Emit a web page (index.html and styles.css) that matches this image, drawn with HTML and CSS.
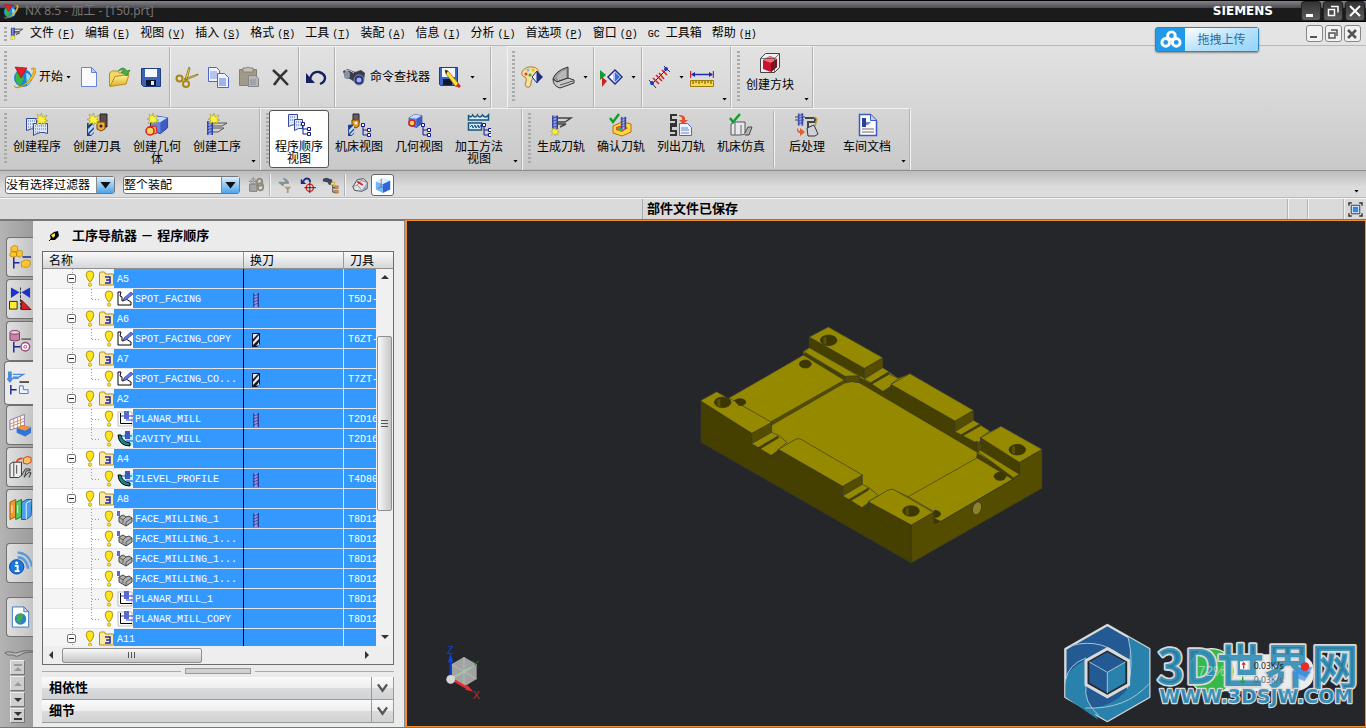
FILE: index.html
```html
<!DOCTYPE html>
<html lang="zh-CN">
<head>
    <meta charset="UTF-8">
    <meta name="viewport" content="width=device-width, initial-scale=1.0">
    <title>NX 8.5 - 加工 - [150.prt]</title>
    <link rel="stylesheet" href="styles.css">
</head>
<body>
    <!-- 图标库 -->
    <svg class="sprite" aria-hidden="true">
        <linearGradient id="gGold" x1="0" y1="0" x2="0" y2="1"><stop offset="0" stop-color="#fff3a0"/><stop offset="1" stop-color="#e0b020"/></linearGradient>
        <linearGradient id="gSteel" x1="0" y1="0" x2="1" y2="0"><stop offset="0" stop-color="#2a3a90"/><stop offset=".5" stop-color="#a8b4f4"/><stop offset="1" stop-color="#1a2680"/></linearGradient>

        <symbol id="star" viewBox="0 0 12 12"><path d="M6 0l1 4 4-2-2 4 3 1-3 1 1 3-3-2-1 3-1-3-4 2 2-4-3-1 3-1-1-4 3 2z" fill="#fff23a" stroke="#8a8a30" stroke-width=".5"/></symbol>
        <symbol id="tree" viewBox="0 0 10 14"><path d="M2 3v9h5M2 7h5" fill="none" stroke="#111a90"/><path d="M.5.5h3v3h-3zM6.500 5.500h3v3h-3zM6.500 10.500h3v3h-3z" fill="#fff" stroke="#111a90"/></symbol>
        <symbol id="endmill" viewBox="0 0 8 14"><path d="M1 0h6v14H1z" fill="url(#gSteel)"/><path d="M1 3l6-2M1 6l6-2M1 9l6-2M1 12l6-2" stroke="#2a3aa8" stroke-width=".8" fill="none"/></symbol>
        <symbol id="drill" viewBox="0 0 8 14"><path d="M0 0h8v11l-3 3H0z" fill="#10162e"/><path d="M1 1h5L1 6zM1 9l6-7v4l-6 6zM4 13l3-4v3z" fill="#e4e8ee"/></symbol>
        <symbol id="bluedrill" viewBox="0 0 8 14"><path d="M0 1h7v10l-3 3H0z" fill="#1c3c8c"/><path d="M1 7l6-6v4l-6 6zM2 12l5-5v3l-3 3z" fill="#b8d8f4"/></symbol>
        <symbol id="gbox" viewBox="0 0 14 14"><path d="M1 4l5-3 7 1v7l-5 4-7-2z" fill="#5f86ec" stroke="#23358a" stroke-width=".7"/><path d="M1 4l7 1 5-3-7-1z" fill="#c5dbff"/><path d="M8 5v8l5-4V2z" fill="#3f5cc4"/></symbol>

        <symbol id="nx" viewBox="0 0 24 24"><circle cx="11" cy="13" r="9" fill="#1487e0"/><path d="M4 9q4-4 7 0l1 5q-3 4-4 7-6-4-4-12z" fill="#39b54a"/><path d="M14 8q5 1 5 6t-4 6z" fill="#8fe0ff"/><path d="M2 21q2 3 9-1T21 8q2-4-2-4 5-3 5 2-2 9-11 14-9 5-11 1z" fill="#f7c21c" stroke="#b07a00" stroke-width=".6"/><path d="M3 2l12 1-6 10z" fill="#e3202c" stroke="#8c0710" stroke-width=".6"/></symbol>
        <symbol id="new" viewBox="0 0 24 24"><path d="M4.500 2.500h10l5 5v14h-15z" fill="#f7faff" stroke="#6a82d8"/><path d="M14.500 2.500v5h5z" fill="#c2cff5" stroke="#6a82d8"/></symbol>
        <symbol id="open" viewBox="0 0 24 24"><path d="M1.500 21V8l3-2h5l2 2h8v5" fill="#f2d868" stroke="#b59018"/><path d="M2 21.500l5-10 14-2-3 9.500z" fill="url(#gGold)" stroke="#b59018"/><path d="M10 6q5-6 9 0l3-1-3 6-6-4 3-.5q-2-3-6-.5z" fill="#48b048" stroke="#1c7020" stroke-width=".6"/></symbol>
        <symbol id="save" viewBox="0 0 24 24"><path d="M2.500 3.500h19v18h-17l-2-2z" fill="#3a62b8" stroke="#223c80"/><path d="M6 4h12v8H6z" fill="#f4f7ff"/><path d="M7 15h10v6H7z" fill="#0f1630"/><path d="M12 16h3v4h-3z" fill="#e8ecf6"/></symbol>
        <symbol id="cut" viewBox="0 0 24 24"><path d="M14 2l1 1-3 12-2-1zM23 9v1l-12 5-2-1z" fill="#f3df7a" stroke="#8a6c10" stroke-width=".8"/><circle cx="4.500" cy="13.500" r="3" fill="none" stroke="#a98716" stroke-width="2"/><circle cx="11" cy="19" r="3" fill="none" stroke="#a98716" stroke-width="2"/></symbol>
        <symbol id="copy" viewBox="0 0 24 24"><path d="M2.500 2.500h8l3 3v11h-11z" fill="#eef3ff" stroke="#4c66c4"/><path d="M4 7h7M4 9h7M4 11h7M4 13h7" stroke="#7f93dc"/><path d="M11.500 8.500h7l4 4v10h-11z" fill="#eef3ff" stroke="#4c66c4"/><path d="M13 14h7M13 16h7M13 18h7M13 20h7" stroke="#5670cc"/></symbol>
        <symbol id="paste" viewBox="0 0 24 24"><path d="M2.500 4.500h17v16h-17z" fill="#a09a88" stroke="#86806e"/><path d="M6 3h3l2-1 2 1h3v4H6z" fill="#c4c2ba" stroke="#86806e"/><path d="M11.500 10.500h7l3 3v8h-10z" fill="#b5b5bb" stroke="#85858c"/><path d="M13 15h6M13 17h6M13 19h6" stroke="#8e8e96"/></symbol>
        <symbol id="del" viewBox="0 0 24 24"><path d="M5 5q8 7 15 15M19 5q-8 7-13 15" fill="none" stroke="#333" stroke-width="2.500"/></symbol>
        <symbol id="undo" viewBox="0 0 24 24"><path d="M6 14q2-8 9-7 6 2 6 6 0 4-5 6" fill="none" stroke="#16205c" stroke-width="2.400"/><path d="M2 8v10h9z" fill="#16205c"/></symbol>
        <symbol id="find" viewBox="0 0 24 24"><path d="M1 6l5-2 7 3 6-2 4 3-1 7-5 4-6-3-3-2-5-1z" fill="#3b3f4a"/><ellipse cx="5" cy="10" rx="3" ry="4" fill="#8a93a6"/><circle cx="17" cy="15" r="5" fill="#24307a" stroke="#888fa0"/><circle cx="17" cy="15" r="2.500" fill="#9fb5ff"/><path d="M3 6l4-1 5 3" stroke="#c7ccd8" fill="none"/></symbol>
        <symbol id="saveedit" viewBox="0 0 24 24"><path d="M1.500 2.500h18v18h-17l-1-1z" fill="#3a66c8" stroke="#223c80"/><path d="M4 3h13v9H4z" fill="#f4f7ff"/><path d="M5 14h9v6H5z" fill="#0f1630"/><path d="M7 5l3 1 11 13-3 3L8 9z" fill="#ffdf30" stroke="#8a6200" stroke-width=".7"/><path d="M20 18l3 3-2 2-3-2z" fill="#d8281c"/><path d="M7 5l3 1-2 3z" fill="#222"/></symbol>
        <symbol id="palette" viewBox="0 0 24 24"><path d="M2 7q3-6 11-5 6 1 6 7l-5 4q-3 1-3 5 0 5-4 4-3-1-1-5 1-4-1-5-4-1-3-5z" fill="#f7dfa0" stroke="#a87f28"/><circle cx="8" cy="5" r="1.500" fill="#5cc4ff"/><circle cx="13" cy="5" r="1.500" fill="#f3b400"/><circle cx="6" cy="9" r="1.500" fill="#e43a2a"/><circle cx="10" cy="10" r="1.500" fill="#36a836"/><path d="M17 6l6 6-6 6z" fill="#1d2c84"/><path d="M17 6l-5 6 5 6z" fill="#dfe7ff" stroke="#1d2c84"/></symbol>
        <symbol id="laptop" viewBox="0 0 24 24"><path d="M2 14Q4 6 17 2v11L6 17z" fill="#9a9a9a" stroke="#333"/><path d="M6 12q2-5 9-7v8l-8 2z" fill="#b8b8b8"/><path d="M2 14l4 3 11-4 6 2v3L9 23q-7-2-7-9z" fill="#c9c9c9" stroke="#333"/><path d="M9 20l13-4" stroke="#555"/></symbol>
        <symbol id="diamond" viewBox="0 0 24 24"><path d="M1 5l6 5-6 5z" fill="#129a30"/><path d="M3 12l5 4-5 6z" fill="#d42020"/><path d="M16 5l7 7-7 7-7-7z" fill="#fff" stroke="#1d2c84" stroke-width="1.500"/><path d="M16 7v10l5-5z" fill="#3b6be0"/><path d="M16 7v10l-2-2V9z" fill="#a8c4ff"/></symbol>
        <symbol id="measure" viewBox="0 0 24 24"><path d="M4 20L20 4" stroke="#222"/><path d="M6 13l6 6M9 10l6 6M12 8l5 6M15 5l5 5" stroke="#d42020" stroke-width="1.500"/><path d="M2 15l7 8M17 1l6 6" stroke="#333"/><circle cx="5" cy="18" r="2" fill="#1d34c8"/><circle cx="19" cy="4" r="2" fill="#1d34c8"/></symbol>
        <symbol id="ruler" viewBox="0 0 24 24"><path d="M.5 6v7M23.500 6v7" stroke="#d42020" stroke-width="1.500"/><path d="M2 9.500h20" stroke="#1d2cb4" stroke-width="1.500"/><path d="M5 7L1 9.500 5 12zM19 7l4 2.500-4 2.500z" fill="#1d2cb4"/><path d="M.5 15.500h23v6H.5z" fill="#f8dc50" stroke="#a07c10"/><path d="M3 16v3M6 16v2M9 16v3M12 16v2M15 16v3M18 16v2M21 16v3" stroke="#5c4600"/></symbol>
        <symbol id="cube" viewBox="0 0 24 24"><path d="M2.500 7.500l5-5h14v14l-5 5h-14z" fill="#eee" stroke="#444"/><path d="M5 9l7-4 7 3v8l-6 5-8-3z" fill="#c81430"/><path d="M5 9l7-4 7 3-6 4z" fill="#ff6a74"/><path d="M13 12l6-4v8l-6 5z" fill="#88081c"/><path d="M2.500 7.500h14v14M16.500 7.500l5-5" fill="none" stroke="#444" stroke-width=".7"/></symbol>

        <symbol id="prog" viewBox="0 0 24 24"><path d="M1.500 5.500h10v11q-5-2-10 1z" fill="#dde6fa" stroke="#34499c"/><path d="M8.500 10.500h14v10q-7-3-14 2z" fill="#dde6fa" stroke="#34499c"/><path d="M3 8h7M3 11h5M3 14h5M10 13h11M10 16h11M10 19h6" stroke="#5b6fb8" stroke-dasharray="1 1"/></symbol>
        <symbol id="cprog" viewBox="0 0 24 24"><use href="#prog" width="24" height="24"/><use href="#star" x="10" y="0" width="13" height="13"/></symbol>
        <symbol id="ctool" viewBox="0 0 24 24"><use href="#bluedrill" x="2" y="9" width="8" height="14"/><path d="M15 1h7v13h-7z" fill="#5a4a50" stroke="#222"/><path d="M12 9h8v7l-4 2-4-2z" fill="#f2a83c" stroke="#7a4600"/><circle cx="16" cy="13" r="1.500" fill="#222"/><use href="#star" x="2" y="0" width="13" height="13"/></symbol>
        <symbol id="cgeo" viewBox="0 0 24 24"><use href="#gbox" x="4" y="2" width="20" height="20"/><path d="M4 14l7-1 1 7-7 2z" fill="#ffb640" stroke="#d42020"/><circle cx="5" cy="18" r="4" fill="#ffd25a" stroke="#d42020" stroke-width="1.500"/><use href="#star" x="2" y="0" width="12" height="12"/></symbol>
        <symbol id="cop" viewBox="0 0 24 24"><path d="M8 10h14l-5 3H8M8 15h11l-6 4H8" fill="none" stroke="#555"/><use href="#endmill" x="1" y="7" width="8" height="16"/><use href="#star" x="3" y="0" width="12" height="12"/></symbol>
        <symbol id="vprog" viewBox="0 0 24 24"><path d="M1.500 1.500h9v11q-4-2-9 1z" fill="#dde6fa" stroke="#34499c"/><path d="M7.500 6.500h8v9q-4-1-8 2z" fill="#dde6fa" stroke="#34499c"/><path d="M3 4h6M3 7h4M9 9h5M9 12h5" stroke="#5b6fb8" stroke-dasharray="1 1"/><use href="#tree" x="14" y="9" width="10" height="14"/></symbol>
        <symbol id="vtool" viewBox="0 0 24 24"><path d="M6 1h6v9H6z" fill="#6a5a60" stroke="#222"/><path d="M5 7h7v6l-3 2-4-2z" fill="#e79a1c" stroke="#7a4600"/><circle cx="9" cy="10" r="1.500" fill="#fff"/><use href="#bluedrill" x="1" y="11" width="7" height="12"/><use href="#tree" x="14" y="10" width="10" height="14"/></symbol>
        <symbol id="vgeo" viewBox="0 0 24 24"><use href="#gbox" x="1" y="0" width="15" height="16"/><circle cx="5" cy="10" r="3" fill="#ffd25a" stroke="#d42020" stroke-width="1.500"/><use href="#tree" x="14" y="10" width="10" height="14"/></symbol>
        <symbol id="vmethod" viewBox="0 0 24 24"><path d="M1.500 7V2q2 4 4 0 3 4 5 0 2 4 5 0 3 4 6 0v5zM1.500 10h13v7h-13z" fill="#d8ecf8" stroke="#17567e" stroke-width="1.500"/><path d="M3 14l2-2 1 3 2-3 1 3 2-3 1 3 2-3" fill="none" stroke="#17567e"/><use href="#tree" x="15" y="10" width="10" height="14"/></symbol>
        <symbol id="gen" viewBox="0 0 24 24"><path d="M8 5h14l-6 4H8M8 11h9l-6 3" fill="none" stroke="#444" stroke-width="1.500"/><use href="#endmill" x="2" y="2" width="8" height="15"/><use href="#star" x="1" y="14" width="10" height="9"/></symbol>
        <symbol id="verify" viewBox="0 0 24 24"><path d="M4 13l9-4 9 2v8l-9 4-9-3z" fill="#ffd940" stroke="#c06a10"/><path d="M7 14l7-2 5 3-6 4-6-2z" fill="#f04a28"/><path d="M8 15l4-1 2 3-3 1z" fill="#36b848"/><use href="#endmill" x="11" y="3" width="7" height="14"/><path d="M1 5l3 4 6-8" fill="none" stroke="#0fa02c" stroke-width="2.400"/></symbol>
        <symbol id="list" viewBox="0 0 24 24"><path d="M8 2H2v5h5v4H1M8 13H2v5h5v4H1" fill="none" stroke="#333" stroke-width="2"/><path d="M10.500 10.500h8l4 4v8h-12z" fill="#eef3ff" stroke="#5668b4"/><path d="M12 15h7M12 17h8M12 20h8" stroke="#6c80cc"/><path d="M10 2q7 0 6 5h3l-5 4-4-4h3q1-3-3-4z" fill="#e2502c"/></symbol>
        <symbol id="sim" viewBox="0 0 24 24"><path d="M2 11l4-2h10v12l-4 1H2z" fill="#e8e8ec" stroke="#555"/><path d="M6 9v13M12 12v9" stroke="#666"/><path d="M16 20l3-6h4l-3 8h-4" fill="#b4b4b8" stroke="#444"/><path d="M1 5l3 4 7-8" fill="none" stroke="#0fa02c" stroke-width="2.400"/></symbol>
        <symbol id="post" viewBox="0 0 24 24"><path d="M0 4h10M0 7h9" stroke="#444"/><use href="#endmill" x="2" y="0" width="7" height="13"/><path d="M10 5h10v4h-7v8" fill="none" stroke="#444" stroke-width="2"/><path d="M12 15l7-3 4 9-3 2h-7z" fill="#cfd2d8" stroke="#333"/><path d="M19 4l3 2-2 7" stroke="#c09a40" fill="none" stroke-width="1.500"/><path d="M2 16q0 4 3 4v3l5-4-5-4v3q-2 0-2-3z" fill="#e2602c"/></symbol>
        <symbol id="shop" viewBox="0 0 24 24"><path d="M4.500 1.500h11l6 6v15h-17z" fill="#fff" stroke="#3b5ac4" stroke-width="1.500"/><path d="M15.500 1.500v6h6" fill="#c4d2f8" stroke="#3b5ac4"/><path d="M7 5h4v9H7z" fill="#2c3f9c"/><path d="M11 9h5l-3 3h-2" fill="#7486d4"/><path d="M7 16h12M7 19h12" stroke="#666"/></symbol>

        <symbol id="link" viewBox="0 0 20 20"><path d="M3 9h8v8H3z" fill="#a7a7a7" stroke="#777"/><circle cx="7" cy="6" r="3" fill="none" stroke="#8c8c8c"/><path d="M7 1v9M2 6h9" stroke="#8c8c8c"/><ellipse cx="14" cy="7" rx="3" ry="4" fill="none" stroke="#8e8a78" stroke-width="2"/><ellipse cx="15" cy="12" rx="3" ry="4" fill="none" stroke="#8e8a78" stroke-width="2"/></symbol>
        <symbol id="funnel" viewBox="0 0 20 20"><path d="M3 7h8q0-3-3-4 5 0 6 5H8v3L3 7z" fill="#8d9a9c" stroke="#77868a"/><path d="M9 12h8l-3 3v4h-2v-4z" fill="#aa9c78"/></symbol>
        <symbol id="snap" viewBox="0 0 20 20"><path d="M5 6q1-4 5-3 3 1 2 4" fill="none" stroke="#1a2680" stroke-width="2"/><path d="M2 3v6h6z" fill="#1a2680"/><circle cx="12" cy="13" r="4" fill="none" stroke="#e02020" stroke-width="1.500"/><path d="M12 7v12M6 13h13" stroke="#222"/></symbol>
        <symbol id="treefind" viewBox="0 0 20 20"><path d="M1 3l4-1 6 2 1 5-4 1-2-3-5-1z" fill="#3d465a"/><path d="M12 9v9h3M12 13h3" stroke="#333" fill="none"/><path d="M10 7h4v3h-4z" fill="#f6e76a" stroke="#8c7a20" stroke-width=".5"/><path d="M14 11h4v3h-4zM14 16h4v3h-4z" fill="#e8943c" stroke="#703c10" stroke-width=".5"/></symbol>
        <symbol id="dice" viewBox="0 0 20 20"><path d="M2 12l5-8 7-1 4 4v7l-6 3-8-1z" fill="#e2e5ee" stroke="#444"/><path d="M2 12l5-2 5 6M7 10l4-5 7 2" fill="none" stroke="#666" stroke-width=".7"/><path d="M7 6l6 4" stroke="#e02020" stroke-width="2"/><path d="M12 16l5-7v5z" fill="#8ea2c8"/></symbol>
        <symbol id="bluecube" viewBox="0 0 20 20"><path d="M2 6l8 3v10l-8-4z" fill="#67baff"/><path d="M2 6l7-4 9 3-8 4z" fill="#d8f0ff"/><path d="M10 9l8-4v10l-8 4z" fill="#2a66e0"/><path d="M8 3v9M4 14l4-2 5 3" stroke="#e03030" stroke-width=".8" fill="none"/></symbol>
        <symbol id="full" viewBox="0 0 16 16"><path d="M1 4V1h3M12 1h3v3M15 12v3h-3M4 15H1v-3" fill="none" stroke="#333" stroke-width="1.500"/><path d="M3.500 3.500h9v9h-9z" fill="#fff" stroke="#333"/><path d="M5 5h6v6H5z" fill="#3b86e0"/></symbol>

        <!-- 资源条图标 -->
        <symbol id="r-asm" viewBox="0 0 24 24"><path d="M5 12v12M5 18h6M14 12h9" stroke="#1b2590" fill="none" stroke-width="1.500"/><path d="M2 2l3-2 4 1v4l-3 2-4-1zM1 8l3-2 4 1v4l-3 1-4-1zM8 7l3-2 3 1v4l-3 2-3-1zM13 17l4-2 5 1v5l-4 2-5-1z" fill="#ffc52e" stroke="#b8860b" stroke-width=".8"/></symbol>
        <symbol id="r-con" viewBox="0 0 24 24"><path d="M2 0l9 5-9 6zM22 0l-9 5 9 6z" fill="#1a34c8"/><path d="M12 0v24" stroke="#333" stroke-dasharray="3 1"/><path d="M.5 14.500h8v8h-8z" fill="#ffea3a" stroke="#222"/><path d="M13 13v10h10z" fill="#d42020" stroke="#611"/></symbol>
        <symbol id="r-part" viewBox="0 0 24 24"><path d="M1 3h10v8q-5 2-10 0z" fill="#c884a8" stroke="#7c3c60"/><ellipse cx="6" cy="3" rx="5" ry="2" fill="#f0c8dc" stroke="#7c3c60"/><path d="M5 13v11M5 18h7" stroke="#1b2590" stroke-width="1.500"/><path d="M13 10h10" stroke="#222"/><circle cx="17" cy="18" r="4.500" fill="#fff" stroke="#a04878" stroke-width="1.500"/><circle cx="17" cy="18" r="1.500" fill="none" stroke="#a04878"/></symbol>
        <symbol id="r-op" viewBox="0 0 24 24"><path d="M1 0h4v7h2l-4 5-4-5h2z" fill="#4a8ce0"/><path d="M6 3h11l-5 3H6M6 7h6" fill="none" stroke="#4a8ce0" stroke-width="1.500"/><path d="M4 14v10M4 19h6" stroke="#1b2590" stroke-width="1.500"/><path d="M13 11h10" stroke="#222" stroke-width="1.500"/><path d="M13 15h4v4h5v4h-9z" fill="#eaf4ff" stroke="#4a78c0"/></symbol>
        <symbol id="r-kb" viewBox="0 0 24 24"><path d="M1 7l15-6v12L1 17z" fill="#fff" stroke="#8874b0"/><path d="M1 11l15-6M1 14l15-6M5 5v11M9 4v11M12 3v11" stroke="#c89068"/><path d="M8 15l5-3 10 2v6l-6 4-9-4z" fill="#2f74d8"/><path d="M8 15l5-3 10 2-6 4z" fill="#f2923a"/></symbol>
        <symbol id="r-mach" viewBox="0 0 24 24"><path d="M1 9l3-2h9v14l-3 2H1z" fill="#eee" stroke="#333"/><path d="M5 7v15M8 10v9" stroke="#444"/><path d="M13 21l4-7h5v2h-4l-2 7M16 22l4-4h3l-2 5" fill="#bbb" stroke="#333"/><path d="M15 3l4-2 4 1v5l-4 2-4-1z" fill="#f8c06a" stroke="#d04010"/><path d="M14 3Q9 3 8 7" stroke="#e04820" fill="none" stroke-width="2"/></symbol>
        <symbol id="r-books" viewBox="0 0 24 24"><path d="M1 5l6-3v18l-6 3z" fill="#f49a2c" stroke="#a05a08"/><path d="M7 5l6-3v18l-6 3z" fill="#5cc85c" stroke="#1c7420"/><path d="M13 5l6-3h5l-1 17-5 4h-5z" fill="#4aa0ec" stroke="#18509c"/><path d="M18 6l5-3M18 6v17M3 8v8M9 8v8" stroke="#e8f4ff"/></symbol>
        <symbol id="r-web" viewBox="0 0 24 24"><path d="M9 6q9 0 11 12M9 1q13 1 15 15" fill="none" stroke="#5a9ad8" stroke-width="2.500"/><circle cx="8" cy="16" r="7.500" fill="#1e78dc" stroke="#0c4898"/><circle cx="8" cy="12" r="1.500" fill="#fff"/><path d="M6 15h3v5M6 20.500h5" stroke="#fff" stroke-width="2" fill="none"/></symbol>
        <symbol id="r-hist" viewBox="0 0 24 24"><path d="M3.500 1.500h12l5 5v16h-17z" fill="#fff" stroke="#3b78c4"/><path d="M15.500 1.500v5h5z" fill="#c4dcf8" stroke="#3b78c4"/><circle cx="12" cy="14" r="6" fill="#2e80c8"/><path d="M8 11q4-4 7-1l-2 5-2 4-3-3z" fill="#3fae48"/></symbol>

        <!-- 导航树图标 -->
        <symbol id="bulb" viewBox="0 0 10 18"><path d="M5 1q4 0 4 4 0 3-3 7H4Q1 8 1 5q0-4 4-4z" fill="#ffe61a" stroke="#a88a10"/><circle cx="5" cy="15.500" r="1.800" fill="#ffe61a" stroke="#a88a10" stroke-width=".7"/></symbol>
        <symbol id="fold" viewBox="0 0 15 15"><path d="M.5 14V2l1-1h4l1 2h8v11z" fill="#fbe9a4" stroke="#b48a1c"/><path d="M6 6h5v3H7M6 12h5V9" fill="none" stroke="#1b2ab0" stroke-width="1.500"/></symbol>
        <symbol id="spot" viewBox="0 0 16 16"><path d="M4 1H1v13h13v-3L9 8 5 10V6L3 5z" fill="#fff" stroke="#000"/><path d="M14 1l2 2-7 6-3 1 1-3z" fill="#6678d8" stroke="#26348c" stroke-width=".7"/></symbol>
        <symbol id="planar" viewBox="0 0 16 16"><path d="M1 1h14v14H1z" fill="#fff" stroke="#bbb"/><path d="M3.500 2v10.500H15" fill="none" stroke="#000"/><path d="M4 5h12M9 9h7" stroke="#2636e0"/><path d="M7 0h5v8H7z" fill="#5a6ac8"/></symbol>
        <symbol id="cavity" viewBox="0 0 16 16"><path d="M7 2h9v12H7z" fill="#a8f4ff"/><path d="M1 4h3q1 7 9 8v3Q2 15 1 4z" fill="#1a8a80" stroke="#000"/><path d="M4 5h11M9 10h7" stroke="#2636e0"/><path d="M8 0h5v8H8z" fill="#4656b8"/></symbol>
        <symbol id="face" viewBox="0 0 16 16"><path d="M2 6l4-2 3 2 3-1 3 2v4l-6 4-7-4z" fill="#b0b0b0" stroke="#444"/><path d="M2 6l4 3 3-3M9 11l6-4M9 11v4M6 9v3" fill="none" stroke="#444" stroke-width=".8"/><path d="M0 0h3v5H0z" fill="#5a6ac8"/></symbol>
    </svg>

    <div class="titlebar">
        <svg class="app-icon"><use href="#nx"/></svg>
        <span class="title">NX 8.5 - 加工 - [150.prt]</span>
        <span class="brand">SIEMENS</span>
        <button class="win-btn" aria-label="最小化"><svg viewBox="0 0 18 18"><path d="M4 12h7v3H4z" fill="#fff"/></svg></button>
        <button class="win-btn" aria-label="还原"><svg viewBox="0 0 18 18"><path d="M4.500 7.500h6v6h-6zM7 4.500h7v6" fill="none" stroke="#fff" stroke-width="1.500"/></svg></button>
        <button class="win-btn" aria-label="关闭"><svg viewBox="0 0 18 18"><path d="M4 4l10 10M14 4L4 14" stroke="#fff" stroke-width="2"/></svg></button>
    </div>

    <nav class="menubar">
        <span class="grip"></span>
        <svg class="menu-icon"><use href="#gen"/></svg>
        <a href="#">文件<i>(<u>F</u>)</i></a>
        <a href="#">编辑<i>(<u>E</u>)</i></a>
        <a href="#">视图<i>(<u>V</u>)</i></a>
        <a href="#">插入<i>(<u>S</u>)</i></a>
        <a href="#">格式<i>(<u>R</u>)</i></a>
        <a href="#">工具<i>(<u>T</u>)</i></a>
        <a href="#">装配<i>(<u>A</u>)</i></a>
        <a href="#">信息<i>(<u>I</u>)</i></a>
        <a href="#">分析<i>(<u>L</u>)</i></a>
        <a href="#">首选项<i>(<u>P</u>)</i></a>
        <a href="#">窗口<i>(<u>O</u>)</i></a>
        <a href="#" class="gc"><i>GC </i>工具箱</a>
        <a href="#">帮助<i>(<u>H</u>)</i></a>
        <span class="mdi">
            <button aria-label="最小化文档"><svg viewBox="0 0 14 14"><path d="M3 9h7v2H3z" fill="#555"/></svg></button>
            <button aria-label="还原文档"><svg viewBox="0 0 14 14"><path d="M3 6h6v5H3zM5 3h6v6" fill="none" stroke="#555" stroke-width="1.500"/></svg></button>
            <button aria-label="关闭文档"><svg viewBox="0 0 14 14"><path d="M3 3l8 8M11 3l-8 8" stroke="#555" stroke-width="2.500"/></svg></button>
        </span>
    </nav>

    <!-- 网盘上传浮动按钮 -->
    <button class="upload">
        <svg viewBox="0 0 30 24"><g fill="none" stroke="#fff" stroke-width="3"><circle cx="16" cy="8" r="4"/><circle cx="10" cy="15" r="4"/><circle cx="21" cy="15" r="4"/></g></svg>
        <span>拖拽上传</span>
    </button>

    <div class="toolbars">
        <div class="row">
            <div class="bar">
                <span class="grip"></span>
                <div class="section">
                    <button class="wide"><svg><use href="#nx"/></svg>开始<b class="arrow"></b></button>
                    <button class="tool" aria-label="新建"><svg><use href="#new"/></svg></button>
                    <button class="tool" aria-label="打开"><svg><use href="#open"/></svg></button>
                    <button class="tool" aria-label="保存"><svg><use href="#save"/></svg></button>
                </div>
                <div class="section">
                    <button class="tool" aria-label="剪切"><svg><use href="#cut"/></svg></button>
                    <button class="tool" aria-label="复制"><svg><use href="#copy"/></svg></button>
                    <button class="tool" aria-label="粘贴"><svg><use href="#paste"/></svg></button>
                    <button class="tool" aria-label="删除"><svg><use href="#del"/></svg></button>
                </div>
                <div class="section">
                    <button class="tool" aria-label="撤消"><svg><use href="#undo"/></svg></button>
                </div>
                <div class="section">
                    <button class="wide finder"><svg><use href="#find"/></svg>命令查找器</button>
                    <button class="tool" aria-label="另存为"><svg><use href="#saveedit"/></svg></button>
                    <button class="drop" aria-label="更多"><b class="arrow"></b></button>
                    <button class="drop more" aria-label="工具条选项"><b class="arrow"></b></button>
                </div>
            </div>
            <div class="bar spaced">
                <span class="grip"></span>
                <div class="section">
                    <button class="tool" aria-label="编辑显示"><svg><use href="#palette"/></svg></button>
                    <button class="tool" aria-label="截面"><svg><use href="#laptop"/></svg></button>
                    <button class="drop" aria-label="更多"><b class="arrow"></b></button>
                </div>
                <div class="section">
                    <button class="tool" aria-label="显示和隐藏"><svg><use href="#diamond"/></svg></button>
                    <button class="drop" aria-label="更多"><b class="arrow"></b></button>
                </div>
                <div class="section">
                    <button class="tool" aria-label="测量"><svg><use href="#measure"/></svg></button>
                    <button class="drop" aria-label="更多"><b class="arrow"></b></button>
                    <button class="tool" aria-label="测量距离"><svg><use href="#ruler"/></svg></button>
                    <button class="drop more" aria-label="工具条选项"><b class="arrow"></b></button>
                </div>
            </div>
            <div class="bar">
                <span class="grip"></span>
                <button class="big"><svg><use href="#cube"/></svg>创建方块</button>
                <button class="drop more" aria-label="工具条选项"><b class="arrow"></b></button>
            </div>
        </div>
        <div class="row">
            <div class="bar">
                <span class="grip"></span>
                <button class="big"><svg><use href="#cprog"/></svg>创建程序</button>
                <button class="big"><svg><use href="#ctool"/></svg>创建刀具</button>
                <button class="big"><svg><use href="#cgeo"/></svg>创建几何体</button>
                <button class="big"><svg><use href="#cop"/></svg>创建工序</button>
                <button class="drop more" aria-label="工具条选项"><b class="arrow"></b></button>
            </div>
            <div class="bar">
                <span class="grip"></span>
                <button class="big active"><svg><use href="#vprog"/></svg>程序顺序视图</button>
                <button class="big"><svg><use href="#vtool"/></svg>机床视图</button>
                <button class="big"><svg><use href="#vgeo"/></svg>几何视图</button>
                <button class="big"><svg><use href="#vmethod"/></svg>加工方法视图</button>
                <button class="drop more" aria-label="工具条选项"><b class="arrow"></b></button>
            </div>
            <div class="bar">
                <span class="grip"></span>
                <button class="big"><svg><use href="#gen"/></svg>生成刀轨</button>
                <button class="big"><svg><use href="#verify"/></svg>确认刀轨</button>
                <button class="big"><svg><use href="#list"/></svg>列出刀轨</button>
                <button class="big"><svg><use href="#sim"/></svg>机床仿真</button>
                <span class="divider"></span>
                <button class="big"><svg><use href="#post"/></svg>后处理</button>
                <button class="big"><svg><use href="#shop"/></svg>车间文档</button>
                <button class="drop more" aria-label="工具条选项"><b class="arrow"></b></button>
            </div>
        </div>
    </div>

    <div class="filterbar">
        <span class="select"><select aria-label="选择过滤器"><option>没有选择过滤器</option></select></span>
        <span class="select second"><select aria-label="选择范围"><option>整个装配</option></select></span>
        <button aria-label="关联"><svg><use href="#link"/></svg></button>
        <span class="divider"></span>
        <button aria-label="重置过滤器"><svg><use href="#funnel"/></svg></button>
        <button aria-label="捕捉"><svg><use href="#snap"/></svg></button>
        <button aria-label="在导航器中查找"><svg><use href="#treefind"/></svg></button>
        <span class="divider"></span>
        <button aria-label="选择面"><svg><use href="#dice"/></svg></button>
        <button class="active" aria-label="着色"><svg><use href="#bluecube"/></svg></button>
        <button class="drop more last" aria-label="工具条选项"><b class="arrow"></b></button>
    </div>

    <div class="status">
        <span class="cue"></span>
        <strong>部件文件已保存</strong>
        <span class="cell small"></span>
        <span class="cell"></span>
        <button class="cell" aria-label="全屏"><svg><use href="#full"/></svg></button>
    </div>

    <main>
        <aside class="resource">
            <button aria-label="装配导航器"><svg><use href="#r-asm"/></svg></button>
            <button aria-label="约束导航器"><svg><use href="#r-con"/></svg></button>
            <button aria-label="部件导航器"><svg><use href="#r-part"/></svg></button>
            <button class="current" aria-label="工序导航器"><svg><use href="#r-op"/></svg></button>
            <button aria-label="加工知识"><svg><use href="#r-kb"/></svg></button>
            <button aria-label="机床库"><svg><use href="#r-mach"/></svg></button>
            <button aria-label="重用库"><svg><use href="#r-books"/></svg></button>
            <button class="apart" aria-label="浏览器"><svg><use href="#r-web"/></svg></button>
            <button class="apart" aria-label="历史记录"><svg><use href="#r-hist"/></svg></button>
            <svg class="curl" viewBox="0 0 30 8"><path d="M1 3q2-2 6-1 5 2 9 0 4-2 14-1M1 3q2 3 8 2 4 3 8 0 3-3 13-3" fill="#bbb" stroke="#666"/></svg>
            <div class="steps">
                <button aria-label="到顶部"><svg viewBox="0 0 10 8"><path d="M1 0h8v2H1zM5 3l4 4H1z" fill="#999"/></svg></button>
                <button aria-label="向上"><svg viewBox="0 0 10 8"><path d="M5 2l4 4H1z" fill="#999"/></svg></button>
                <button aria-label="向下"><svg viewBox="0 0 10 8"><path d="M5 6L1 2h8z" fill="#333"/></svg></button>
                <button aria-label="到底部"><svg viewBox="0 0 10 8"><path d="M5 4L1 0h8zM1 6h8v2H1z" fill="#333"/></svg></button>
            </div>
        </aside>

        <section class="navigator">
            <h2><svg viewBox="0 0 12 12"><path d="M1 11l3-3" stroke="#000"/><path d="M2 5l4-3 4-1 1 5-4 4H3z" fill="#000"/><path d="M3 5l4-2v3L5 8z" fill="#ffe040"/></svg>工序导航器 － 程序顺序</h2>
            <div class="grid">
                <div class="grid-main">
                    <div class="table-wrap">
                        <table>
                            <thead>
                                <tr><th class="c1">名称</th><th class="c2">换刀</th><th>刀具</th></tr>
                            </thead>
                            <tbody>
                                <tr class="group odd"><td><div><button aria-label="折叠"></button><svg class="bulb"><use href="#bulb"/></svg><svg class="fold"><use href="#fold"/></svg><span>A5</span></div></td><td></td><td></td></tr>
                                <tr class="end"><td><div><i class="twig"></i><svg class="bulb"><use href="#bulb"/></svg><svg class="op"><use href="#spot"/></svg><span>SPOT_FACING</span></div></td><td><svg class="cutter"><use href="#endmill"/></svg></td><td>T5DJ-1</td></tr>
                                <tr class="group odd"><td><div><button aria-label="折叠"></button><svg class="bulb"><use href="#bulb"/></svg><svg class="fold"><use href="#fold"/></svg><span>A6</span></div></td><td></td><td></td></tr>
                                <tr class="end"><td><div><i class="twig"></i><svg class="bulb"><use href="#bulb"/></svg><svg class="op"><use href="#spot"/></svg><span>SPOT_FACING_COPY</span></div></td><td><svg class="cutter"><use href="#drill"/></svg></td><td>T6ZT-1</td></tr>
                                <tr class="group odd"><td><div><button aria-label="折叠"></button><svg class="bulb"><use href="#bulb"/></svg><svg class="fold"><use href="#fold"/></svg><span>A7</span></div></td><td></td><td></td></tr>
                                <tr class="end"><td><div><i class="twig"></i><svg class="bulb"><use href="#bulb"/></svg><svg class="op"><use href="#spot"/></svg><span>SPOT_FACING_CO...</span></div></td><td><svg class="cutter"><use href="#drill"/></svg></td><td>T7ZT-1</td></tr>
                                <tr class="group odd"><td><div><button aria-label="折叠"></button><svg class="bulb"><use href="#bulb"/></svg><svg class="fold"><use href="#fold"/></svg><span>A2</span></div></td><td></td><td></td></tr>
                                <tr><td><div><i class="twig"></i><svg class="bulb"><use href="#bulb"/></svg><svg class="op"><use href="#planar"/></svg><span>PLANAR_MILL</span></div></td><td><svg class="cutter"><use href="#endmill"/></svg></td><td>T2D16</td></tr>
                                <tr class="end odd"><td><div><i class="twig"></i><svg class="bulb"><use href="#bulb"/></svg><svg class="op"><use href="#cavity"/></svg><span>CAVITY_MILL</span></div></td><td></td><td>T2D16</td></tr>
                                <tr class="group"><td><div><button aria-label="折叠"></button><svg class="bulb"><use href="#bulb"/></svg><svg class="fold"><use href="#fold"/></svg><span>A4</span></div></td><td></td><td></td></tr>
                                <tr class="end odd"><td><div><i class="twig"></i><svg class="bulb"><use href="#bulb"/></svg><svg class="op"><use href="#cavity"/></svg><span>ZLEVEL_PROFILE</span></div></td><td><svg class="cutter"><use href="#endmill"/></svg></td><td>T4D80</td></tr>
                                <tr class="group"><td><div><button aria-label="折叠"></button><svg class="bulb"><use href="#bulb"/></svg><svg class="fold"><use href="#fold"/></svg><span>A8</span></div></td><td></td><td></td></tr>
                                <tr class="odd"><td><div><i class="twig"></i><svg class="bulb"><use href="#bulb"/></svg><svg class="op"><use href="#face"/></svg><span>FACE_MILLING_1</span></div></td><td><svg class="cutter"><use href="#endmill"/></svg></td><td>T8D12</td></tr>
                                <tr><td><div><i class="twig"></i><svg class="bulb"><use href="#bulb"/></svg><svg class="op"><use href="#face"/></svg><span>FACE_MILLING_1...</span></div></td><td></td><td>T8D12</td></tr>
                                <tr class="odd"><td><div><i class="twig"></i><svg class="bulb"><use href="#bulb"/></svg><svg class="op"><use href="#face"/></svg><span>FACE_MILLING_1...</span></div></td><td></td><td>T8D12</td></tr>
                                <tr><td><div><i class="twig"></i><svg class="bulb"><use href="#bulb"/></svg><svg class="op"><use href="#face"/></svg><span>FACE_MILLING_1...</span></div></td><td></td><td>T8D12</td></tr>
                                <tr class="odd"><td><div><i class="twig"></i><svg class="bulb"><use href="#bulb"/></svg><svg class="op"><use href="#planar"/></svg><span>PLANAR_MILL_1</span></div></td><td></td><td>T8D12</td></tr>
                                <tr class="end"><td><div><i class="twig"></i><svg class="bulb"><use href="#bulb"/></svg><svg class="op"><use href="#planar"/></svg><span>PLANAR_MILL_COPY</span></div></td><td></td><td>T8D12</td></tr>
                                <tr class="group odd"><td><div><button aria-label="折叠"></button><svg class="bulb"><use href="#bulb"/></svg><svg class="fold"><use href="#fold"/></svg><span>A11</span></div></td><td></td><td></td></tr>
                            </tbody>
                        </table>
                    </div>
                    <div class="vscroll">
                        <span class="cap"></span>
                        <button aria-label="向上滚动"><svg viewBox="0 0 8 5"><path d="M4 0l4 4H0z" fill="#333"/></svg></button>
                        <span class="track-before"></span>
                        <span class="thumb"><i></i></span>
                        <span class="track-after"></span>
                        <button aria-label="向下滚动"><svg viewBox="0 0 8 5"><path d="M4 4l4-4H0z" fill="#333"/></svg></button>
                    </div>
                </div>
                <div class="hscroll">
                    <button aria-label="向左滚动"><svg viewBox="0 0 5 8"><path d="M0 4l4-4v8z" fill="#333"/></svg></button>
                    <span class="thumb"><i></i></span>
                    <span class="space"></span>
                    <button aria-label="向右滚动"><svg viewBox="0 0 5 8"><path d="M4 4L0 0v8z" fill="#333"/></svg></button>
                </div>
            </div>
            <div class="splitter"><i></i></div>
            <button class="fold-panel">相依性<svg viewBox="0 0 12 10"><path d="M1 1l5 7 5-7" fill="none" stroke="#555" stroke-width="2.500"/></svg></button>
            <button class="fold-panel">细节<svg viewBox="0 0 12 10"><path d="M1 1l5 7 5-7" fill="none" stroke="#555" stroke-width="2.500"/></svg></button>
        </section>

        <section class="viewport">
            <!-- 零件模型 -->
            <svg class="model" viewBox="0 0 1080 780">
                <g stroke="#3a3a2c" stroke-width="2" stroke-linejoin="round">
                    <path fill="#958900" d="M33 256L80 230l35 20L340 120v-12l18-10V66l57-30 163 92v30l47 32 35-14 190 110v30l50 34 33-16 123 69-68 39v36l-18 14-215 126-22 7-3-33-66 38-129-70v25l-77-42v-29L265 403v27l-80-44v-31L33 264z"/>
                    <!-- 侧面 -->
                    <path fill="#453f00" d="M33 258l152 97v31l23 14 37 22 20 8v-27l193 111v29l22 13 37 21 18 8v-25l129 70v114L33 382z"/>
                    <path fill="#544d00" d="M664 630l66-38 3 33 22-7 215-126 18-14v-36l68-39v117L664 744z"/>
                    <!-- 后排凸台 -->
                    <path fill="#453f00" d="M358 66l165 94v30L358 98z"/>
                    <path fill="#544d00" d="M523 160l55-32v30l-55 34z"/>
                    <path fill="#453f00" d="M508 187l37 20 35 22 22 7v-28l193 110v30l67 38v26L508 203z"/>
                    <path fill="#544d00" d="M795 318l55-32v30l-55 34z"/>
                    <path fill="#958900" d="M545 207l52-30 28 13-22 18-2 16-23 5zM816 361l56-30 28 17-28 20v20l-22-9z"/>
                    <path fill="#958900" d="M523 192l55-34 19 12-54 34zM795 350l55-34 21 12-55 33z"/>
                    <path fill="#453f00" d="M580 229l22-15v22zM850 385l12-7v12zM541 204l54-32 3 5-53 30zM814 359l55-32 3 5-53 30z"/>
                    <path fill="#453f00" d="M872 368l116 74v36l-116-70z"/>
                    <path fill="#958900" d="M872 368l61-34 123 69-68 39zM603 208l57-32 190 110-55 32zM358 66l57-30 163 92-55 32z"/>
                    <path fill="#544d00" d="M862 385l8-6v29l-8 6z"/>
                    <path fill="#453f00" d="M862 415l110 66-4 12-108-65z"/>
                    <path fill="#958900" d="M864 410l8-4 116 72-18 10z"/>
                    <path fill="#453f00" d="M345 114l120 70-1 12-124-76z"/>
                    <path fill="#958900" d="M342 110l16-12 150 86h-43z"/>
                    <!-- 型腔 -->
                    <path fill="#544d00" d="M465 186l15-3h28v20q-22-7-43-1z"/>
                    <path fill="#544d00" d="M243 320l222-126v9L245 330z"/>
                    <path fill="none" d="M117 249l128 73M465 204q22-8 43-1M655 545l207-117M655 545l75 44M604 522l51 23"/>
                    <!-- 前排凸台 -->
                    <path fill="#544d00" d="M185 355l60-33v30l-60 34zM458 514l59-34v28l-59 35z"/>
                    <path fill="#958900" d="M185 386l60-34 22 10 24 20-26 21-5 14-17 4-35-21zM458 543l59-35 20 10 28 24-30 18-2 15-17 3-35-22z"/>
                    <path fill="#453f00" d="M204 398l60-35 1 6-55 33zM476 554l59-35 1 6-55 33zM245 421l20-16v25zM517 577l18-13v21z"/>
                    <path fill="#958900" d="M265 403l50-29q10-7 20 0l182 106-59 34zM535 560l58-34q12-7 22 0l115 66-66 38z"/>
                </g>
                <g fill="#3d3800" stroke="#333322" stroke-width="2">
                    <ellipse cx="416" cy="76" rx="25" ry="16"/><ellipse cx="346" cy="147" rx="18" ry="12"/>
                    <ellipse cx="98" cy="262" rx="25" ry="16"/><path d="M134 256q10-8 24-4 12 4 9 13-6 8-20 7z"/>
                    <ellipse cx="982" cy="404" rx="25" ry="16"/><ellipse cx="930" cy="484" rx="18" ry="12"/>
                    <ellipse cx="663" cy="588" rx="25" ry="16"/><path d="M732 586q18 0 20 11-4 12-19 10zM733 610l16 8-16 7z"/>
                    <ellipse cx="861" cy="580" rx="13" ry="20" fill="#8d822a" transform="rotate(18 861 580)"/>
                </g>
                <g fill="#5a5300"><path d="M400 68l9-3v25l-9-4zM82 254l9-3v25l-9-4zM966 396l9-3v25l-9-4zM647 580l9-3v25l-9-4z"/></g>
            </svg>

            <!-- 坐标系 -->
            <svg class="triad" viewBox="0 0 240 210">
                <path d="M102 66l38 22v44l-38 23-38-23V88z" fill="#a2a4a4"/>
                <path d="M102 66v89M64 88l76 44M140 88l-76 44" stroke="#c4c6c4" stroke-width="2"/>
                <path d="M66 130l56-32" stroke="#a4c8a4" stroke-width="5"/>
                <path d="M128 78l8 8 10-8M136 86v6" stroke="#2a7a34" stroke-width="3" fill="none"/>
                <path d="M62 130V76" stroke="#0c38c8" stroke-width="7"/><path d="M62 56l8 26H54z" fill="#0c48e8"/>
                <path d="M68 134l42 24" stroke="#e03030" stroke-width="8"/><path d="M112 150l18 20-24-6z" fill="#e03030"/>
                <circle cx="62" cy="133" r="13" fill="#d8d8d8"/>
                <text x="51" y="57" fill="#1040c8">Z</text><text x="128" y="192" fill="#b82c2c">X</text>
            </svg>

            <!-- 网速悬浮窗与水印 -->
            <svg class="watermark" viewBox="0 0 948 339">
                <path d="M515 121h222q55 4 55 54t-55 57H515z" fill="#ececec"/>
                <circle cx="485" cy="172" r="68" fill="#35b94d" stroke="#e8f4e8" stroke-width="4"/>
                <g stroke="#d8dadb" stroke-width="7" stroke-linejoin="round">
                    <path d="M172 33l126 72v144l-126 72-126-72V105z" fill="#235a94"/>
                </g>
                <path d="M234 68l64 37v144l-126 72-66-38q80 0 126-58l4-87q8-44-2-70z" fill="#2882ac"/>
                <path d="M46 216q-2-48 62-78v70q-8 40 38 110L46 249z" fill="#2882ac"/>
                <path d="M46 200q10-50 62-68M60 96q100-30 176 50M234 68q20 80-2 156M298 208q-70 80-192 74M146 304q-46-40-38-90" fill="none" stroke="#a4c4d8" stroke-width="3"/>
                <path d="M172 104l64 36v72l-64 36-64-36v-72z" fill="#25262a" stroke="#d8dadb" stroke-width="9"/>
                <path d="M172 114l54 30-54 31-54-31z" fill="#235a94"/><path d="M118 144l54 31v62l-54-31z" fill="#235a94"/><path d="M226 144l-54 31v62l54-31z" fill="#2882ac"/>
                <path d="M118 144l54 31 54-31M172 175v62" fill="none" stroke="#a4c4d8" stroke-width="3"/>
                <text class="mark cjk" x="320" y="211">3D</text><text class="mark cjk" x="500" y="210">世界网</text>
                <text class="mark site" x="328" y="267">WWW.3DSJW.COM</text>
                <path d="M570 142h22v24h-22z" fill="#fff"/>
                <path d="M581 164v-18M576 152l5-6 5 6" stroke="#e03030" stroke-width="4" fill="none"/>
                <path d="M578 188v20M571 200l7 8 7-8" stroke="#24a048" stroke-width="4" fill="none"/>
                <text class="pct" x="443" y="186">72%</text>
                <text class="speed" x="611" y="164">0.03K/s</text><text class="speed dim" x="611" y="208">0.03K/s</text>
                <path d="M728 168l60-10-24 44-34-14z" fill="#3c90e8" fill-opacity=".7"/>
                <circle cx="765" cy="158" r="13" fill="#e82c2c"/>
            </svg>
        </section>
    </main>
</body>
</html>
```

FILE: styles.css
```css
* {
    box-sizing: border-box;
}

body {
    margin: 0;
    height: 100vh;
    display: flex;
    flex-direction: column;
    overflow: hidden;
    position: relative;
    background: #dcdcdc;
    color: #000;
    font-family: "Liberation Sans", "Noto Sans CJK SC", sans-serif;
    font-size: 12px;
    line-height: 12px;
}

button {
    font: inherit;
    color: inherit;
    padding: 0;
    border: none;
    background: none;
    cursor: pointer;
}

svg {
    display: block;
    flex: none;
}

.sprite {
    position: absolute;
    width: 0;
    height: 0;
}

/* 标题栏 */
.titlebar {
    flex: none;
    height: 22px;
    display: flex;
    align-items: center;
    padding: 0 1px 0 2px;
    background: linear-gradient(#000 0 1px, #85838a 1px, #4c4a50 8px, #1b1b1b 8px 21px, #000 21px);
}

.app-icon {
    width: 17px;
    height: 16px;
}

.title {
    flex: 1;
    margin-left: 6px;
    color: #777;
    font-family: "Noto Sans", "Noto Sans CJK SC", sans-serif;
    line-height: 20px;
}

.brand {
    margin-right: 26px;
    color: #fff;
    font-family: "DejaVu Sans", sans-serif;
    font-weight: bold;
}

.win-btn {
    width: 20px;
    height: 20px;
    margin-left: 2px;
    border: 1px solid #222;
    border-radius: 3px;
    background: linear-gradient(#333, #5e5e5e);
}

.win-btn svg {
    width: 18px;
    height: 18px;
}

/* 菜单 */
.menubar {
    flex: none;
    height: 24px;
    display: flex;
    align-items: center;
    padding-left: 4px;
    background: #e4e4e4;
    border-bottom: 1px solid #b8b8b8;
}

.menubar .grip {
    height: 14px;
}

.menu-icon {
    width: 17px;
    height: 15px;
    margin: 0 5px 0 1px;
}

.menubar a {
    margin-right: 10px;
    color: #000;
    text-decoration: none;
    white-space: pre;
    line-height: 14px;
}

.menubar i {
    margin-left: 3px;
    font-family: "Liberation Mono", monospace;
    font-size: 10px;
    font-style: normal;
}

.menubar .gc i {
    margin-left: 0;
}

.mdi {
    display: flex;
    gap: 2px;
    margin: 0 5px 0 auto;
}

.mdi button {
    width: 17px;
    height: 17px;
    border: 1px solid #888;
    border-radius: 3px;
    background: #f2f2f2;
}

.mdi svg {
    width: 14px;
    height: 14px;
}

.upload {
    position: absolute;
    top: 27px;
    right: 107px;
    width: 104px;
    height: 25px;
    display: flex;
    align-items: center;
    border: 1px solid #2a86c4;
    border-radius: 3px;
    background: #2299e8;
    box-shadow: 0 1px 2px #888;
    color: #2c6a9c;
}

.upload svg {
    width: 29px;
    height: 23px;
}

.upload span {
    flex: 1;
    line-height: 23px;
    padding-top: 1px;
    height: 23px;
    background: linear-gradient(160deg, #fff, #b8e2fa 50%, #94d4f8);
}

/* 工具条 */
.toolbars {
    flex: none;
    background: linear-gradient(#e2e2e2, #c9c9c9);
    border-bottom: 1px solid #8e8e8e;
}

.row {
    display: flex;
    height: 62px;
}

.bar {
    display: flex;
    padding-left: 4px;
    border-right: 1px solid #b4b4b4;
    border-top: 1px solid #f2f2f2;
    border-bottom: 1px solid #bcbcbc;
    box-shadow: 1px 0 #f2f2f2;
}

.bar + .bar {
    margin-left: 1px;
    padding-left: 5px;
}

.bar + .spaced {
    margin-left: 16px;
    padding-left: 4px;
    border-left: 1px solid #f2f2f2;
}

.grip {
    flex: none;
    width: 3px;
    height: 52px;
    align-self: center;
    background: repeating-linear-gradient(#aaa 0 2px, transparent 2px 4px);
}

.section {
    display: flex;
    align-items: center;
    padding: 0 2px;
    border-right: 1px solid #b0b0b0;
    box-shadow: 1px 0 #f4f4f4;
}

.section:last-child {
    padding-right: 0;
    border: none;
    box-shadow: none;
}

.wide {
    height: 28px;
    display: flex;
    align-items: center;
    gap: 3px;
    padding: 0 3px;
}

.finder {
    gap: 4px;
    padding: 0 5px;
}

.wide svg,
.tool svg,
.big svg {
    width: 24px;
    height: 24px;
}

.tool {
    width: 31px;
    height: 28px;
    padding-left: 3px;
}

.arrow {
    display: block;
    width: 5px;
    height: 3px;
    background: #000;
    clip-path: polygon(0 0, 100% 0, 50% 100%);
}

.drop {
    width: 12px;
    padding-left: 4px;
}

.more {
    align-self: flex-end;
    height: 16px;
}

.big {
    width: 60px;
    height: 60px;
    display: flex;
    flex-direction: column;
    align-items: center;
    justify-content: flex-start;
    padding: 4px 5px 0;
    gap: 4px;
}

.big.active {
    height: 58px;
    margin-top: 1px;
    border: 1px solid #555;
    border-radius: 3px;
    padding: 2px 4px 0;
    background: #fff;
}

.divider {
    width: 2px;
    margin: 2px;
    background: linear-gradient(90deg, #b0b0b0 50%, #f4f4f4 50%);
}

/* 选择条 */
.filterbar {
    flex: none;
    height: 27px;
    display: flex;
    align-items: center;
    padding-left: 5px;
    background: linear-gradient(#bcbcbc, #dcdcdc 60%);
}

.select {
    position: relative;
    width: 110px;
    height: 18px;
    border: 1px solid #777;
    border-radius: 3px;
    background: #fff;
}

.select.second {
    width: 117px;
    margin: 0 4px 0 8px;
}

.select::before {
    content: "";
    position: absolute;
    top: 0;
    right: 0;
    width: 17px;
    height: 16px;
    background: linear-gradient(#dceefc, #4ca4ec);
    border-left: 1px solid #888;
}

.select::after {
    content: "";
    position: absolute;
    top: 5px;
    right: 3px;
    width: 11px;
    height: 7px;
    background: #111;
    clip-path: polygon(0 0, 100% 0, 50% 100%);
}

.select select {
    position: relative;
    z-index: 1;
    display: block;
    width: 100%;
    height: 16px;
    padding: 0;
    border: none;
    outline: none;
    appearance: none;
    background: none;
    color: #000;
    font: inherit;
}

.filterbar button {
    width: 23px;
    height: 22px;
}

.filterbar button svg {
    width: 18px;
    height: 18px;
    margin: 0 auto;
}

.filterbar .divider {
    height: 22px;
    margin: 0 2px;
}

.filterbar .active {
    border: 1px solid #666;
    border-radius: 3px;
    background: #fff;
}

.filterbar .last {
    width: 12px;
    height: 14px;
    margin-left: auto;
    padding: 0;
}

/* 状态行 */
.status {
    flex: none;
    height: 21px;
    display: flex;
    align-items: center;
    background: #dadada;
    border-top: 1px solid #f6f6f6;
    box-shadow: 0 -1px #bbb;
}

.cue {
    width: 47%;
}

.status strong {
    flex: 1;
    padding-left: 4px;
    border-left: 1px solid #aaa;
    font-size: 13px;
    line-height: 20px;
}

.cell {
    width: 36px;
    height: 20px;
    border-left: 1px solid #b4b4b4;
    box-shadow: inset 1px 0 #f2f2f2;
}

.cell.small {
    width: 20px;
}

button.cell {
    width: 23px;
    padding-left: 4px;
    border-left: 1px solid #b4b4b4;
}

.cell svg {
    width: 15px;
    height: 15px;
}

main {
    flex: 1;
    min-height: 0;
    display: flex;
    border-top: 2px solid #777a74;
    border-bottom: 1px solid #777a74;
}

/* 资源条 */
.resource {
    flex: none;
    width: 33px;
    display: flex;
    flex-direction: column;
    align-items: flex-end;
    gap: 2px;
    padding-top: 16px;
    background: linear-gradient(90deg, #b4b4b4, #9c9c9c);
}

.resource > button {
    flex: none;
    width: 27px;
    height: 40px;
    padding-left: 2px;
    border: 1px solid #707070;
    border-right: none;
    border-radius: 4px 0 0 4px;
    background: linear-gradient(90deg, #e0e0e0, #c4c4c4);
}

.resource > button svg {
    width: 23px;
    height: 24px;
}

.resource > .current {
    width: 29px;
    height: 44px;
    margin: -2px 0;
    background: #ebebeb;
}

.resource > .apart {
    margin-top: 12px;
}

.curl {
    width: 29px;
    height: 8px;
    margin-top: 11px;
}

.steps {
    display: grid;
    gap: 1px;
    width: 23px;
}

.steps button {
    width: 15px;
    height: 15px;
    padding-left: 2px;
    border: 1px solid #eee;
    border-right-color: #777;
    border-bottom-color: #777;
    background: #cfcfcf;
}

.steps svg {
    width: 10px;
    height: 8px;
}

/* 导航器 */
.navigator {
    flex: none;
    width: 372px;
    display: flex;
    flex-direction: column;
    padding: 0 10px 4px 9px;
    background: #ebebeb;
    border-right: 1px solid #8a8c88;
}

.navigator h2 {
    display: flex;
    align-items: center;
    gap: 12px;
    height: 30px;
    margin: 0;
    padding-left: 6px;
    font-size: 13px;
    line-height: 30px;
}

.navigator h2 svg {
    width: 12px;
    height: 12px;
}

.grid {
    flex: 1;
    min-height: 0;
    display: flex;
    flex-direction: column;
    border: 1px solid #6c6c6c;
    background: #eee;
}

.grid-main {
    flex: 1;
    min-height: 0;
    display: flex;
}

.table-wrap {
    flex: 1;
    min-width: 0;
    overflow: hidden;
}

table {
    width: 100%;
    table-layout: fixed;
    border-collapse: separate;
    border-spacing: 0;
    background: #3399ff;
}

th {
    height: 17px;
    padding: 2px 0 0 6px;
    text-align: left;
    font-weight: normal;
    background: linear-gradient(#fafafa, #d4d6d8);
    border-bottom: 1px solid #909090;
    border-right: 1px solid #999;
    white-space: nowrap;
}

th:last-child {
    border-right: none;
}

.c1 {
    width: 201px;
}

.c2 {
    width: 100px;
}

td {
    height: 20px;
    padding: 2px 0 0 4px;
    color: #fff;
    font-family: "Liberation Mono", monospace;
    font-size: 10px;
    white-space: nowrap;
    overflow: hidden;
    border-bottom: 1px solid #e2e6ea;
    border-right: 1px solid #d8e4f0;
}

td:first-child {
    padding: 0;
    border-right-color: #000;
    background: repeating-linear-gradient(#999 0 1px, transparent 1px 3px) 29px 0 / 1px 100% no-repeat #fff;
}

.odd td:first-child {
    background-color: #f5f5f5;
}

td:last-child {
    border-right: none;
}

td div {
    display: flex;
    align-items: center;
    height: 19px;
}

td span {
    flex: 1;
    height: 19px;
    padding-left: 2px;
    line-height: 21px;
    background: #3399ff;
}

td button {
    width: 9px;
    height: 9px;
    margin: 0 9px 0 24px;
    border: 1px solid #777;
    border-radius: 2px;
    background: linear-gradient(#222, #222) center / 5px 1px no-repeat #fff;
}

.group span {
    padding-left: 3px;
}

.twig {
    width: 61px;
    height: 19px;
    background:
        repeating-linear-gradient(#999 0 1px, transparent 1px 3px) 48px 0 / 1px 100% no-repeat,
        repeating-linear-gradient(90deg, #999 0 1px, transparent 1px 3px) 49px 10px / 9px 1px no-repeat;
}

.end .twig {
    background-size: 1px 11px, 9px 1px;
}

.bulb {
    width: 10px;
    height: 17px;
}

.fold {
    width: 15px;
    height: 15px;
    margin-left: 4px;
}

.op {
    width: 16px;
    height: 16px;
    margin-left: 3px;
}

.cutter {
    width: 16px;
    height: 14px;
}

.vscroll {
    width: 17px;
    display: flex;
    flex-direction: column;
    background: #f0f0f0;
}

.cap {
    height: 17px;
    background: linear-gradient(#fafafa, #d4d6d8);
    border-bottom: 1px solid #909090;
}

.vscroll button,
.hscroll button {
    flex: none;
    width: 17px;
    height: 17px;
    display: grid;
    place-items: center;
}

.vscroll button svg {
    width: 8px;
    height: 5px;
}

.hscroll button svg {
    width: 5px;
    height: 8px;
}

.track-before {
    flex: 50;
}

.track-after {
    flex: 118;
}

.thumb {
    display: grid;
    place-items: center;
    border: 1px solid #909090;
    border-radius: 2px;
}

.vscroll .thumb {
    flex: 174;
    width: 15px;
    margin-left: 1px;
    background: linear-gradient(90deg, #f8f8f8, #c4c6c8);
}

.vscroll .thumb i {
    width: 7px;
    height: 8px;
    background: repeating-linear-gradient(#555 0 1px, transparent 1px 3px);
}

.hscroll {
    height: 18px;
    display: flex;
    align-items: center;
}

.hscroll .thumb {
    flex: 139;
    height: 15px;
    margin-left: 2px;
    background: linear-gradient(#f8f8f8, #c4c6c8);
}

.hscroll .thumb i {
    width: 8px;
    height: 6px;
    background: repeating-linear-gradient(90deg, #555 0 1px, transparent 1px 3px);
}

.space {
    flex: 158;
}

.hscroll button:last-child {
    margin-right: 17px;
}

.splitter {
    display: grid;
    place-items: center;
    height: 12px;
    background: linear-gradient(#aaa, #aaa) center / 100% 1px no-repeat;
}

.splitter i {
    width: 66px;
    height: 6px;
    background: #d0d0d0;
    border: 1px solid #999;
    box-shadow: -4px 0 #ebebeb, 4px 0 #ebebeb;
}

.fold-panel {
    display: flex;
    align-items: center;
    justify-content: space-between;
    height: 23px;
    padding-left: 7px;
    border-bottom: 1px solid #999;
    border-right: 1px solid #999;
    background: linear-gradient(#fafafa, #eee 50%, #dadcde 50%, #d0d2d4);
    font-size: 13px;
    font-weight: bold;
}

.fold-panel svg {
    width: 22px;
    height: 22px;
    padding: 6px 5px;
    border-left: 1px solid #999;
}

/* 图形窗口 */
.viewport {
    flex: 1;
    min-width: 0;
    position: relative;
    overflow: hidden;
    background: #25262a;
    border: 1px solid #f09030;
    border-left-width: 2px;
    margin-top: -1px;
}

.model {
    position: absolute;
    left: 283px;
    top: 94px;
    width: 360px;
    height: 260px;
}

.triad {
    position: absolute;
    left: 23px;
    bottom: 21px;
    width: 80px;
    height: 70px;
}

.triad text {
    font-family: "Liberation Sans", sans-serif;
    font-size: 32px;
}

.watermark {
    position: absolute;
    right: -1px;
    bottom: -1px;
    width: 316px;
    height: 113px;
}

.pct {
    fill: #d8f4dc;
    fill-opacity: 0.6;
    font-family: "Liberation Sans", sans-serif;
    font-size: 42px;
}

.speed {
    fill: #222;
    font-family: "Noto Sans", sans-serif;
    font-size: 26px;
}

.dim {
    fill: #667;
}

.mark {
    fill: #2c8ab4;
    fill-opacity: 0.9;
    stroke: #d8dadb;
    stroke-width: 10px;
    stroke-linejoin: round;
    paint-order: stroke;
    font-family: "DejaVu Sans", sans-serif;
    font-weight: bold;
}

.cjk {
    font-family: "Noto Sans CJK SC", sans-serif;
    font-size: 142px;
}

.site {
    font-size: 57px;
    stroke-width: 7px;
}
```
